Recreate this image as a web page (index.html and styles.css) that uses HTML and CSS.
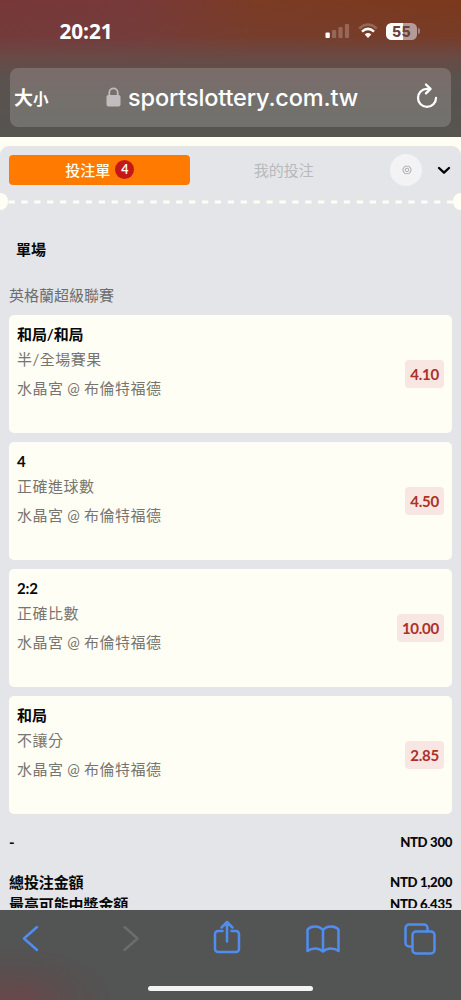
FILE: index.html
```html
<!DOCTYPE html>
<html lang="zh-Hant">
<head>
<meta charset="utf-8">
<meta name="viewport" content="width=device-width, initial-scale=1">
<title>投注單</title>
<link rel="stylesheet" href="styles.css">
</head>
<body>
<div class="phone">
  <header class="browser-top">
    <div class="status">
      <span class="time">20:21</span>
      <div class="indicators">
        <svg class="signal" width="25" height="16" viewBox="0 0 25 16"><rect x="0.5" y="9.5" width="4.3" height="5.5" rx="1" fill="#fff"/><g fill="#fff" opacity=".22"><rect x="7" y="7" width="4.2" height="8" rx="1"/><rect x="13.4" y="4" width="4.2" height="11" rx="1"/><rect x="19.9" y="1" width="4.2" height="14" rx="1"/></g></svg>
        <svg class="wifi" width="20" height="16" viewBox="0 0 20 16" fill="none" stroke="#fff"><path d="M1.200 5.500Q10-2.500 18.800 5.500" stroke-width="2.600" opacity=".22"/><path d="M4 8.600Q10 3.200 16 8.600" stroke-width="2.500"/><path d="M6.700 11.400Q10 8.700 13.300 11.400L10 14.900Z" fill="#fff" stroke="none"/></svg>
        <div class="battery"><span class="level">55</span><i class="battery-tip"></i></div>
      </div>
    </div>
    <div class="address">
      <div class="text-size"><b>大</b><small>小</small></div>
      <div class="site">
        <svg width="15" height="20" viewBox="0 0 15 20"><path d="M3.300 9V5.500a4.200 4.200 0 0 1 8.400 0V9" fill="none" stroke="#c2bcbe" stroke-width="1.800"/><rect x=".5" y="8" width="14" height="11.500" rx="2" fill="#c2bcbe"/></svg>
        <span>sportslottery.com.tw</span>
      </div>
      <svg class="reload" width="22" height="26" viewBox="0 0 22 26" fill="none" stroke="#fff" stroke-width="2.300" stroke-linecap="round" stroke-linejoin="round"><path d="M13.500 5.900H11A9 9 0 1 0 20 14.900"/><path d="M10 1.500l4.500 4.400-4.500 4.500"/></svg>
    </div>
  </header>

  <main class="page">
    <section class="slip">
      <nav class="tabs">
        <div class="tab active">投注單<span class="count">4</span></div>
        <div class="tab">我的投注</div>
        <div class="settings"><svg width="10" height="10" viewBox="0 0 10 10" fill="none" stroke="#9c9ca1" stroke-width=".8"><path d="M3.300 1.200L4.200 1.500 5 .8l.8.7.9-.3 1.200.7.1 1 1 .5v2.900l-1 .6-.1 1-1.200.7-.9-.2-.8.7-.8-.7-.9.2-1.200-.7-.1-1-1-.6V3.400l1-.5.1-1Z"/><rect x="3.400" y="3.400" width="3.200" height="3" rx=".7"/></svg></div>
        <svg class="chevron" width="14" height="9" viewBox="0 0 14 9" fill="none" stroke="#050505" stroke-width="2.400" stroke-linecap="round" stroke-linejoin="round"><path d="M2 2l5 4.700L12 2"/></svg>
      </nav>
      <div class="perforation"><i></i><svg width="445" height="4" viewBox="0 0 445 4"><path d="M.5 2H445" stroke="#fffef5" stroke-width="2.800" stroke-dasharray="6.200 6.700"/></svg><i></i></div>
      <h1>單場</h1>
      <h2>英格蘭超級聯賽</h2>
      <div class="bets">
        <article class="bet"><div><h3>和局/和局</h3><p>半/全場賽果</p><p class="match">水晶宮 @ 布倫特福德</p></div><span class="odds">4.10</span></article>
        <article class="bet"><div><h3>4</h3><p>正確進球數</p><p class="match">水晶宮 @ 布倫特福德</p></div><span class="odds">4.50</span></article>
        <article class="bet"><div><h3>2:2</h3><p>正確比數</p><p class="match">水晶宮 @ 布倫特福德</p></div><span class="odds">10.00</span></article>
        <article class="bet"><div><h3>和局</h3><p>不讓分</p><p class="match">水晶宮 @ 布倫特福德</p></div><span class="odds">2.85</span></article>
      </div>
      <div class="totals">
        <div class="row single"><span>-</span><b>NTD 300</b></div>
        <div class="row"><span>總投注金額</span><b>NTD 1,200</b></div>
        <div class="row payout"><span>最高可能中獎金額</span><b>NTD 6,435</b></div>
      </div>
    </section>
  </main>

  <footer class="toolbar">
    <div class="actions">
      <svg width="18" height="27" viewBox="0 0 18 27"><path d="M15 2L2 13.500 15 25"/></svg>
      <svg class="disabled" width="18" height="27" viewBox="0 0 18 27"><path d="M2.500 2l13 11.500-13 11.500"/></svg>
      <svg class="share" width="28" height="34" viewBox="0 0 28 34"><path d="M9.500 11H5a3 3 0 0 0-3 3v15a3 3 0 0 0 3 3h18a3 3 0 0 0 3-3V14a3 3 0 0 0-3-3h-4.500M14 21.500V2M8.500 7.500L14 2l5.500 5.500"/></svg>
      <svg class="book" width="34" height="28" viewBox="0 0 34 28"><path d="M17 5C13 .3 5 .5 1.500 4.500V26C6 22.500 13 22.500 17 26.500 21 22.500 28 22.500 32.500 26V4.500C29 .5 21 .3 17 5v21"/></svg>
      <svg class="windows" width="32" height="32" viewBox="0 0 32 32"><path d="M7 23.500H5a3.500 3.500 0 0 1-3.500-3.500V5A3.500 3.500 0 0 1 5 1.500h15A3.500 3.500 0 0 1 23.500 5v2"/><rect x="8.500" y="8.500" width="22" height="22" rx="3.500"/></svg>
    </div>
    <div class="home"></div>
  </footer>
</div>
</body>
</html>
```
FILE: styles.css
```css
* { box-sizing: border-box; }
body { margin: 0; font-family: Lato, "Noto Sans CJK TC", sans-serif; color: #080808; }
h1, h2, h3, p { margin: 0; }
svg { display: block; flex: none; }
.phone { width: 461px; height: 1000px; display: flex; flex-direction: column; overflow: hidden; }

.browser-top {
  height: 137px; flex: none; padding: 0 10px;
  background: linear-gradient(180deg, rgba(110,70,64,0) 0, rgba(110,66,62,.3) 36px, rgba(104,75,71,.9) 56px, #5a524e 78px, #565550 100%),
    linear-gradient(90deg, #773739 0, #77393a 28%, #7b3b24 55%, #7b391d 100%);
}
.status { height: 68px; padding: 0 31px 6px 49.500px; display: flex; align-items: center; justify-content: space-between; }
.time { font: 700 20.800px/24px "Open Sans", sans-serif; color: #fff; letter-spacing: -.1px; }
.indicators { display: flex; align-items: center; }
.signal { margin-right: 8px; }
.wifi { margin-right: 8px; }
.battery { display: flex; align-items: center; }
.level { width: 31px; height: 17px; border-radius: 5.500px; background: linear-gradient(90deg, #fff 54%, #b49b98 54%); color: #69403b; font: 800 14px/17px Inter, sans-serif; letter-spacing: .3px; text-align: center; }
.battery-tip { width: 2px; height: 6px; margin-left: 1px; border-radius: 0 2px 2px 0; background: #a38480; }
.address { height: 59px; border-radius: 8px; padding: 0 13px 0 4px; color: #fff; display: flex; align-items: center; background: linear-gradient(180deg, #7b6b69 0, #74706c 55%, #72716d 100%); }
.text-size { display: flex; align-items: baseline; font-family: "Noto Sans CJK TC", sans-serif; width: 92px; margin-top: -3px; }
.text-size b { font-size: 19px; font-weight: 700; }
.text-size small { font-size: 15.500px; font-weight: 700; }
.site { display: flex; align-items: center; gap: 7px; font: 500 23.500px/30px Inter, sans-serif; letter-spacing: -.15px; white-space: nowrap; }
.site svg { margin-top: -2px; }
.reload { margin: -3px 0 0 auto; }

.page { height: 773px; flex: none; overflow: hidden; background: linear-gradient(#fffef5 30px, #e4e5e8 30px); padding-top: 9px; }
.slip { height: 762px; overflow: hidden; background: #e4e5e8; border-radius: 9px 9px 0 0; }
.tabs { height: 47px; padding: 0 10px 0 9px; display: flex; align-items: center; }
.tab { width: 181px; height: 30px; padding: 0 0 1px 1px; border-radius: 4px; display: flex; align-items: center; justify-content: center; font-size: 15px; color: #b8b9bd; }
.tab + .tab { width: 187px; padding-left: 2px; }
.tab.active { background: #ff7a00; color: #fffced; font-weight: 500; }
.count { width: 19px; height: 19px; margin: 1px 0 0 5px; border-radius: 50%; background: #c41719; font: 700 12.500px/19px Lato, sans-serif; text-align: center; }
.settings { width: 32px; height: 32px; margin-left: 14px; border-radius: 50%; background: #f3f3f5; display: flex; align-items: center; justify-content: center; padding-left: 2px; }
.chevron { margin-left: 15px; margin-top: 2px; }
.perforation { height: 17px; display: flex; align-items: center; }
.perforation i { width: 8px; height: 17px; flex: none; background: #fffef5; border-radius: 0 8px 8px 0; }
.perforation i:last-child { border-radius: 8px 0 0 8px; }
h1 { margin: 27px 0 0 16px; font-size: 15px; line-height: 24px; font-weight: 700; }
h2 { margin: 22px 0 0 9px; font-size: 15px; line-height: 24px; font-weight: 400; color: #6c6d70; }
.bets { margin: 8px 9px 0; display: grid; gap: 9px; }
.bet { height: 118px; padding: 7px 8px 0; border-radius: 5px; background: #fffef5; display: flex; justify-content: space-between; }
.bet h3 { font-size: 15px; line-height: 24px; font-weight: 700; letter-spacing: -.1px; }
.bet p { margin-top: 1px; font-size: 15px; line-height: 24px; letter-spacing: .5px; color: #77756f; }
.bet .match { margin-top: 5px; word-spacing: -.6px; }
.odds { height: 28px; margin-top: 38px; padding: 0 5px; border-radius: 4px; background: #f7e6e1; color: #ad3029; font-size: 15px; line-height: 28px; font-weight: 700; letter-spacing: -.25px; }
.totals { padding: 16px 9px 0; }
.row { height: 24px; display: flex; align-items: center; justify-content: space-between; font-size: 15px; line-height: 24px; font-weight: 700; }
.row span { letter-spacing: -.1px; }
.row b { font-size: 13.200px; letter-spacing: -.35px; }
.row.single { margin-bottom: 16px; }
.row.payout { margin-top: -2px; }

.toolbar { height: 90px; flex: none; background: radial-gradient(ellipse 100px 55px at 15px 100%, #6a474a 0, rgba(92,76,76,.5) 60%, rgba(83,84,84,0) 100%), #535454; display: flex; flex-direction: column; align-items: center; }
.actions { width: 100%; height: 57px; padding-left: 22px; display: flex; align-items: center; }
.actions svg { fill: none; stroke: #508df1; stroke-width: 2.500; stroke-linecap: round; stroke-linejoin: round; }
.actions .disabled { stroke: #6b6c6c; margin-left: 82px; }
.actions .share { margin: -3px 0 0 73px; }
.actions .book { margin-left: 65px; }
.actions .windows { margin-left: 64px; }
.home { width: 165px; height: 5px; margin-top: 19px; border-radius: 3px; background: #f3f3f3; }
```
